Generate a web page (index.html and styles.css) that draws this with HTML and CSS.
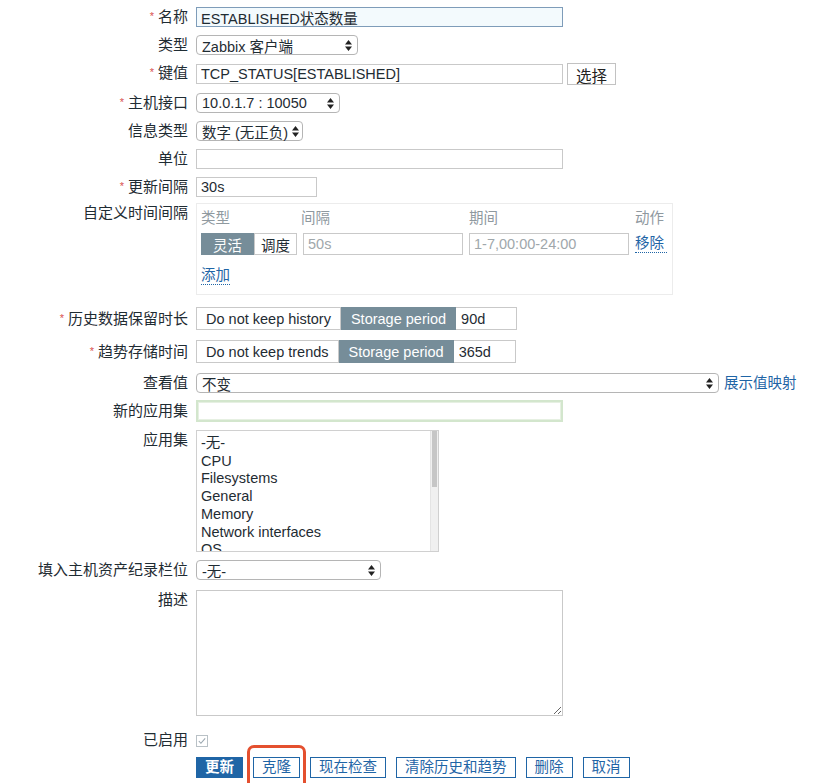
FILE: index.html
```html
<!DOCTYPE html>
<html lang="zh-CN">
<head>
    <meta charset="UTF-8">
    <meta name="viewport" content="width=device-width, initial-scale=1.0">
    <title>监控项</title>
    <link rel="stylesheet" href="styles.css">
</head>
<body>
    <form class="item-form">
        <div class="row">
            <label class="label"><span class="req">*</span>名称</label>
            <div class="control"><input class="field wide focused" type="text" value="ESTABLISHED状态数量" readonly></div>
        </div>

        <div class="row">
            <label class="label">类型</label>
            <div class="control">
                <div class="select w-type"><span>Zabbix 客户端</span><svg class="arrows" viewBox="0 0 7 11"><path d="M3.5 0L7 4.5H0z M3.5 11L0 6.5h7z"/></svg></div>
            </div>
        </div>

        <div class="row">
            <label class="label"><span class="req">*</span>键值</label>
            <div class="control">
                <input class="field wide" type="text" value="TCP_STATUS[ESTABLISHED]" readonly>
                <button type="button" class="btn-plain">选择</button>
            </div>
        </div>

        <div class="row">
            <label class="label"><span class="req">*</span>主机接口</label>
            <div class="control">
                <div class="select w-iface"><span>10.0.1.7 : 10050</span><svg class="arrows" viewBox="0 0 7 11"><path d="M3.5 0L7 4.5H0z M3.5 11L0 6.5h7z"/></svg></div>
            </div>
        </div>

        <div class="row">
            <label class="label">信息类型</label>
            <div class="control">
                <div class="select w-info"><span>数字 (无正负)</span><svg class="arrows" viewBox="0 0 7 11"><path d="M3.5 0L7 4.5H0z M3.5 11L0 6.5h7z"/></svg></div>
            </div>
        </div>

        <div class="row">
            <label class="label">单位</label>
            <div class="control"><input class="field wide" type="text" value="" readonly></div>
        </div>

        <div class="row tight">
            <label class="label"><span class="req">*</span>更新间隔</label>
            <div class="control"><input class="field w-short" type="text" value="30s" readonly></div>
        </div>

        <div class="row loose-lg">
            <label class="label top">自定义时间间隔</label>
            <div class="control">
                <div class="intervals">
                    <div class="iv-grid">
                        <span class="iv-head">类型</span>
                        <span class="iv-head">间隔</span>
                        <span class="iv-head">期间</span>
                        <span class="iv-head">动作</span>

                        <div class="seg-small">
                            <span class="seg-on flex-w">灵活</span>
                            <span class="seg-off sched-w">调度</span>
                        </div>
                        <input class="field ghost" type="text" value="50s" readonly>
                        <input class="field ghost" type="text" value="1-7,00:00-24:00" readonly>
                        <a class="link" href="#">移除</a>
                    </div>
                    <a class="link add" href="#">添加</a>
                </div>
            </div>
        </div>

        <div class="row loose">
            <label class="label mid"><span class="req">*</span>历史数据保留时长</label>
            <div class="control">
                <div class="seg">
                    <span class="seg-off">Do not keep history</span>
                    <span class="seg-on">Storage period</span>
                    <input class="seg-input" type="text" value="90d" readonly>
                </div>
            </div>
        </div>

        <div class="row loose">
            <label class="label mid"><span class="req">*</span>趋势存储时间</label>
            <div class="control">
                <div class="seg">
                    <span class="seg-off">Do not keep trends</span>
                    <span class="seg-on">Storage period</span>
                    <input class="seg-input wider" type="text" value="365d" readonly>
                </div>
            </div>
        </div>

        <div class="row tight">
            <label class="label">查看值</label>
            <div class="control">
                <div class="select w-value"><span>不变</span><svg class="arrows" viewBox="0 0 7 11"><path d="M3.5 0L7 4.5H0z M3.5 11L0 6.5h7z"/></svg></div>
                <a class="link map" href="#">展示值映射</a>
            </div>
        </div>

        <div class="row">
            <label class="label mid">新的应用集</label>
            <div class="control"><input class="field wide glow" type="text" value="" readonly></div>
        </div>

        <div class="row">
            <label class="label top">应用集</label>
            <div class="control">
                <div class="listbox">
                    <ul class="options">
                        <li>-无-</li>
                        <li>CPU</li>
                        <li>Filesystems</li>
                        <li>General</li>
                        <li>Memory</li>
                        <li>Network interfaces</li>
                        <li>OS</li>
                    </ul>
                    <div class="scrollbar"><div class="thumb"></div></div>
                </div>
            </div>
        </div>

        <div class="row loose">
            <label class="label">填入主机资产纪录栏位</label>
            <div class="control">
                <div class="select w-inv"><span>-无-</span><svg class="arrows" viewBox="0 0 7 11"><path d="M3.5 0L7 4.5H0z M3.5 11L0 6.5h7z"/></svg></div>
            </div>
        </div>

        <div class="row spaced">
            <label class="label top">描述</label>
            <div class="control"><textarea class="desc" readonly></textarea></div>
        </div>

        <div class="row snug">
            <label class="label">已启用</label>
            <div class="control">
                <span class="check">
                    <svg viewBox="0 0 11 11"><path d="M2 5.5l2.3 2.5L9 2.5" fill="none" stroke="#9aa7b0" stroke-width="1.2"/></svg>
                </span>
            </div>
        </div>

        <div class="row">
            <span class="label"></span>
            <div class="control actions">
                <button type="button" class="btn primary">更新</button>
                <span class="marked"><button type="button" class="btn">克隆</button></span>
                <button type="button" class="btn">现在检查</button>
                <button type="button" class="btn">清除历史和趋势</button>
                <button type="button" class="btn">删除</button>
                <button type="button" class="btn">取消</button>
            </div>
        </div>
    </form>
</body>
</html>
```

FILE: styles.css
```css
* {
    margin: 0;
    padding: 0;
    box-sizing: border-box;
}

body {
    font-family: 'Liberation Sans', 'Noto Sans CJK SC', sans-serif;
    font-size: 14.5px;
    color: #1f2c33;
    background: #fff;
    overflow: hidden;
}

.item-form {
    padding-top: 7px;
    width: 818px;
}

.row {
    display: grid;
    grid-template-columns: 188px 1fr;
    column-gap: 8px;
    margin-bottom: 8px;
}

.row.tight { margin-bottom: 6px; }
.row.snug { margin-bottom: 7px; }
.row.loose { margin-bottom: 10px; }
.row.loose-lg { margin-bottom: 12px; }
.row.spaced { margin-bottom: 14px; }

.label {
    text-align: right;
    font-size: 15px;
    line-height: 20px;
    height: 20px;
    white-space: nowrap;
}

.label.mid { line-height: 23px; height: 23px; }

.req {
    color: #d9534f;
    font-size: 11px;
    margin-right: 4px;
    position: relative;
    top: -2px;
}

.control {
    display: flex;
    align-items: center;
    gap: 4px;
}

/* text fields */
.field {
    height: 20px;
    border: 1px solid #c9c9c9;
    padding: 0 4px;
    font: inherit;
    color: #1f2c33;
    background: #fff;
    outline: none;
}

.field.wide { width: 367px; }
.field.w-short { width: 121px; }

.field.focused {
    border-color: #7e9cb9;
    background: #f3fafd;
}

.field.glow {
    height: 22px;
    border: 2px solid #d3e6cd;
    box-shadow: inset 0 0 0 1px #e6f0e2;
}

.field.ghost {
    height: 22px;
    width: 160px;
    color: #a0a7ab;
}

.btn-plain {
    height: 22px;
    padding: 0 8px;
    border: 1px solid #c2c2c2;
    background: #fff;
    font: inherit;
    font-size: 15.5px;
    color: #222;
}

/* selects */
.select {
    height: 20px;
    border: 1px solid #b5b5b5;
    border-radius: 4px;
    display: flex;
    align-items: center;
    justify-content: space-between;
    padding: 0 5px;
    background: #fff;
}

.arrows {
    width: 7px;
    height: 11px;
    fill: #222;
    flex-shrink: 0;
}

.w-type { width: 162px; }
.w-iface { width: 144px; }
.w-info { width: 107px; padding-right: 3px; }
.w-value { width: 523px; }
.w-inv { width: 185px; }

.link {
    color: #1f65a6;
    text-decoration: none;
    border-bottom: 1px dotted #1f65a6;
    line-height: 17px;
}

.link.map {
    border-bottom: none;
    margin-left: 1px;
}

/* custom intervals */
.intervals {
    width: 477px;
    height: 92px;
    border: 1px solid #ececec;
    padding: 4px 5px 0 4px;
}

.iv-grid {
    display: grid;
    grid-template-columns: 96px 160px 160px auto;
    column-gap: 6px;
    row-gap: 5px;
    align-items: center;
}

.iv-head {
    color: #8f999f;
    line-height: 20px;
}

.iv-grid .iv-head:nth-child(2) { margin-left: -2px; }

.seg-small {
    display: flex;
    height: 22px;
}

.seg-small .flex-w { width: 53px; }
.seg-small .sched-w { width: 43px; }

.add {
    display: inline-block;
    margin-top: 12px;
}

/* segmented radio */
.seg {
    display: flex;
    height: 23px;
}

.seg-on,
.seg-off {
    display: flex;
    align-items: center;
    justify-content: center;
    padding: 0 9px;
    white-space: nowrap;
}

.seg-off {
    border: 1px solid #c9c9c9;
    background: #fff;
    color: #1f2c33;
}

.seg-on {
    background: #768d99;
    color: #fff;
    border: 1px solid #768d99;
}

.seg-input {
    width: 61px;
    border: 1px solid #c9c9c9;
    border-left: none;
    padding: 0 5px;
    font: inherit;
    color: #1f2c33;
    outline: none;
}

.seg-input.wider { width: 62px; }

/* application list */
.listbox {
    width: 243px;
    height: 122px;
    border: 1px solid #d0d0d0;
    display: flex;
    overflow: hidden;
}

.options {
    list-style: none;
    flex: 1;
    padding: 4px 4px 0;
    line-height: 17.7px;
    overflow: hidden;
}

.scrollbar {
    width: 8px;
    background: #f0f0f0;
    border-left: 1px solid #e4e4e4;
}

.thumb {
    height: 56px;
    background: #c6c6c6;
    margin: 0 1px;
}

.desc {
    width: 367px;
    height: 126px;
    border: 1px solid #c9c9c9;
    resize: both;
    font: inherit;
    outline: none;
}

.check {
    width: 12px;
    height: 12px;
    border: 1px solid #b9c1c6;
    display: flex;
    margin-top: 2px;
}

.check svg {
    width: 10px;
    height: 10px;
}

/* action buttons */
.actions {
    gap: 10px;
    height: 21px;
}

.btn {
    height: 21px;
    padding: 0 8px;
    border: 1px solid #1f65a6;
    background: #fff;
    color: #1f65a6;
    font: inherit;
    line-height: 19px;
    white-space: nowrap;
}

.btn.primary {
    background: #1f65a6;
    color: #fff;
    font-weight: bold;
}

.marked {
    position: relative;
    display: flex;
}

.marked::after {
    content: '';
    position: absolute;
    left: -6px;
    right: -6px;
    top: -12px;
    bottom: -14px;
    border: 3px solid #e4502f;
    border-radius: 7px;
    pointer-events: none;
}
```
